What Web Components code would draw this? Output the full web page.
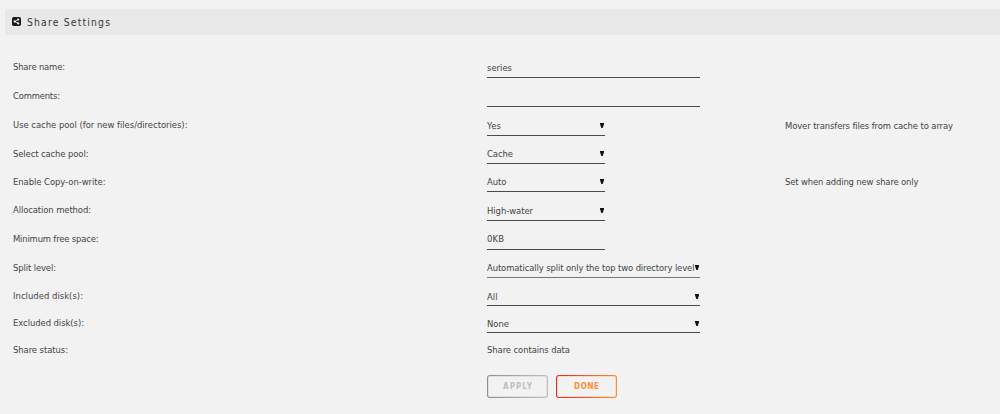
<!DOCTYPE html>
<html lang="en">
<head>
<meta charset="utf-8">
<title>Share Settings</title>
<style>
  body { margin: 0; height: 414px; overflow: hidden; background: #f2f2f2; color: #444; font: 9.4px/12px "DejaVu Sans Condensed", "DejaVu Sans", sans-serif; font-stretch: condensed; }
</style>
</head>
<body>
<share-page>
  <title-bar><fit-text w="83">Share Settings</fit-text></title-bar>
  <form-row h="29" label="Share name:" lw="52"><line-field size="wide" value="series" vw="25"></line-field></form-row>
  <form-row h="29" label="Comments:" lw="47"><line-field size="wide"></line-field></form-row>
  <form-row h="29" label="Use cache pool (for new files/directories):" lw="174.5"><line-field select value="Yes" vw="14"></line-field><fit-text slot="note" w="168">Mover transfers files from cache to array</fit-text></form-row>
  <form-row h="28" low label="Select cache pool:" lw="75.5"><line-field select value="Cache" vw="26"></line-field></form-row>
  <form-row h="28" low label="Enable Copy-on-write:" lw="92.5"><line-field select value="Auto" vw="19.5"></line-field><fit-text slot="note" w="133.5">Set when adding new share only</fit-text></form-row>
  <form-row h="29" label="Allocation method:" lw="78"><line-field select value="High-water" vw="46"></line-field></form-row>
  <form-row h="29" label="Minimum free space:" lw="85.5"><line-field tall value="0KB" vw="17"></line-field></form-row>
  <form-row h="28" low label="Split level:" lw="43"><line-field size="wide" select soft value="Automatically split only the top two directory level" vw="207.5"></line-field></form-row>
  <form-row h="28" low label="Included disk(s):" lw="70"><line-field size="wide" select tight value="All" vw="10.5"></line-field></form-row>
  <form-row h="27" low label="Excluded disk(s):" lw="71"><line-field size="wide" select tight value="None" vw="22"></line-field></form-row>
  <form-row h="27" low label="Share status:" lw="55"><fit-text class="status" w="83">Share contains data</fit-text></form-row>
  <div slot="actions"><line-button tone="muted"><fit-text w="29">APPLY</fit-text></line-button></div>
  <div slot="actions"><line-button><fit-text w="25">DONE</fit-text></line-button></div>
</share-page>
<script>
  // Text tracked out to a given width
  class FitText extends HTMLElement {
    connectedCallback() {
      this.attachShadow({ mode: 'open' });
      this.shadowRoot.innerHTML = `
        <style>
          :host { display: block; white-space: nowrap; }
          span { display: inline-block; }
        </style>
        <span><slot></slot></span>
      `;
      const span = this.shadowRoot.querySelector('span');
      const count = this.textContent.length - 1;
      span.style.letterSpacing = '0';
      const natural = span.getBoundingClientRect().width;
      const gap = (Number(this.getAttribute('w')) - natural) / count;
      span.style.letterSpacing = gap.toFixed(3) + 'px';
      span.style.marginRight = (-gap).toFixed(3) + 'px';
    }
  }

  class SharePage extends HTMLElement {
    connectedCallback() {
      this.attachShadow({ mode: 'open' });
      this.shadowRoot.innerHTML = `
        <style>
          :host { display: flex; flex-direction: column; padding-top: 9px; }
          footer { display: flex; gap: 8px; padding: 15px 0 0 487px; }
        </style>
        <slot></slot>
        <footer><slot name="actions"></slot></footer>
      `;
    }
  }

  class TitleBar extends HTMLElement {
    connectedCallback() {
      this.attachShadow({ mode: 'open' });
      this.shadowRoot.innerHTML = `
        <style>
          :host { display: flex; align-items: center; gap: 6px; box-sizing: border-box; height: 26px; margin: 0 0 14px 5px; padding: 0 0 1px 7px; background: #e8e8e8; color: #383838; font-size: 10.3px; }
          svg { display: block; width: 9px; height: 9px; }
        </style>
        <svg viewBox="0 0 18 18">
          <rect width="18" height="18" rx="3.5" fill="#1c1b1b"/>
          <path d="M12.5 5L5.5 9L12.5 13" fill="none" stroke="#eee" stroke-width="1.7"/>
          <circle cx="12.3" cy="5.2" r="2.3" fill="#eee"/>
          <circle cx="5.5" cy="9" r="2.3" fill="#eee"/>
          <circle cx="12.3" cy="12.8" r="2.3" fill="#eee"/>
        </svg>
        <slot></slot>
      `;
    }
  }

  class FormRow extends HTMLElement {
    connectedCallback() {
      this.attachShadow({ mode: 'open' });
      this.shadowRoot.innerHTML = `
        <style>
          :host { display: grid; grid-template-columns: 474px 298px 1fr; align-items: end; height: ${this.getAttribute('h')}px; padding-left: 13px; }
          .label { padding-bottom: 5px; }
          :host([low]) .label { padding-bottom: 4px; }
          ::slotted([slot="note"]) { padding-bottom: 4px; }
          ::slotted(.status) { padding-bottom: 4px; }
        </style>
        <fit-text class="label" w="${this.getAttribute('lw')}">${this.getAttribute('label')}</fit-text>
        <slot></slot>
        <slot name="note"></slot>
      `;
    }
  }

  class LineField extends HTMLElement {
    connectedCallback() {
      const value = this.getAttribute('value');
      this.attachShadow({ mode: 'open' });
      this.shadowRoot.innerHTML = `
        <style>
          :host { display: flex; justify-content: space-between; box-sizing: border-box; width: 118px; height: 16px; border-bottom: 1px solid #4b4b4b; }
          :host([size="wide"]) { width: 213px; }
          :host([tight]) { height: 15px; }
          :host([tall]) { height: 17px; }
          :host([soft]) { border-bottom-color: #777; }
          svg { width: 5px; height: 5px; margin: 3px 0 0; flex: none; }
        </style>
        ${value ? `<fit-text w="${this.getAttribute('vw')}">${value}</fit-text>` : ''}
        ${this.hasAttribute('select') ? '<svg viewBox="0 0 5 5"><path d="M0 0H4V1L2.7 5H1.3L0 1Z" fill="#111"/></svg>' : ''}
      `;
    }
  }

  class LineButton extends HTMLElement {
    connectedCallback() {
      this.attachShadow({ mode: 'open' });
      this.shadowRoot.innerHTML = `
        <style>
          :host { display: flex; align-items: center; justify-content: center; box-sizing: border-box; width: 61px; height: 23px; border: 1px solid transparent; border-radius: 3px; background: linear-gradient(#f2f2f2, #f2f2f2) padding-box, linear-gradient(90deg, #e22828, #ff8c2f) border-box; box-shadow: inset 0 0 0 1px #ff8c2f38; color: #ff8c2f; font: bold 8px/10px "DejaVu Sans Condensed", "DejaVu Sans", sans-serif; font-stretch: condensed; }
          :host([tone="muted"]) { background: linear-gradient(#f2f2f2, #f2f2f2) padding-box, linear-gradient(90deg, #8f8f8f, #c0c0c0) border-box; box-shadow: inset 0 0 0 1px #a0a0a038; color: #bdbdbd; }
        </style>
        <slot></slot>
      `;
    }
  }

  customElements.define('share-page', SharePage);
  customElements.define('title-bar', TitleBar);
  customElements.define('form-row', FormRow);
  customElements.define('line-field', LineField);
  customElements.define('line-button', LineButton);
  customElements.define('fit-text', FitText);
</script>
</body>
</html>
